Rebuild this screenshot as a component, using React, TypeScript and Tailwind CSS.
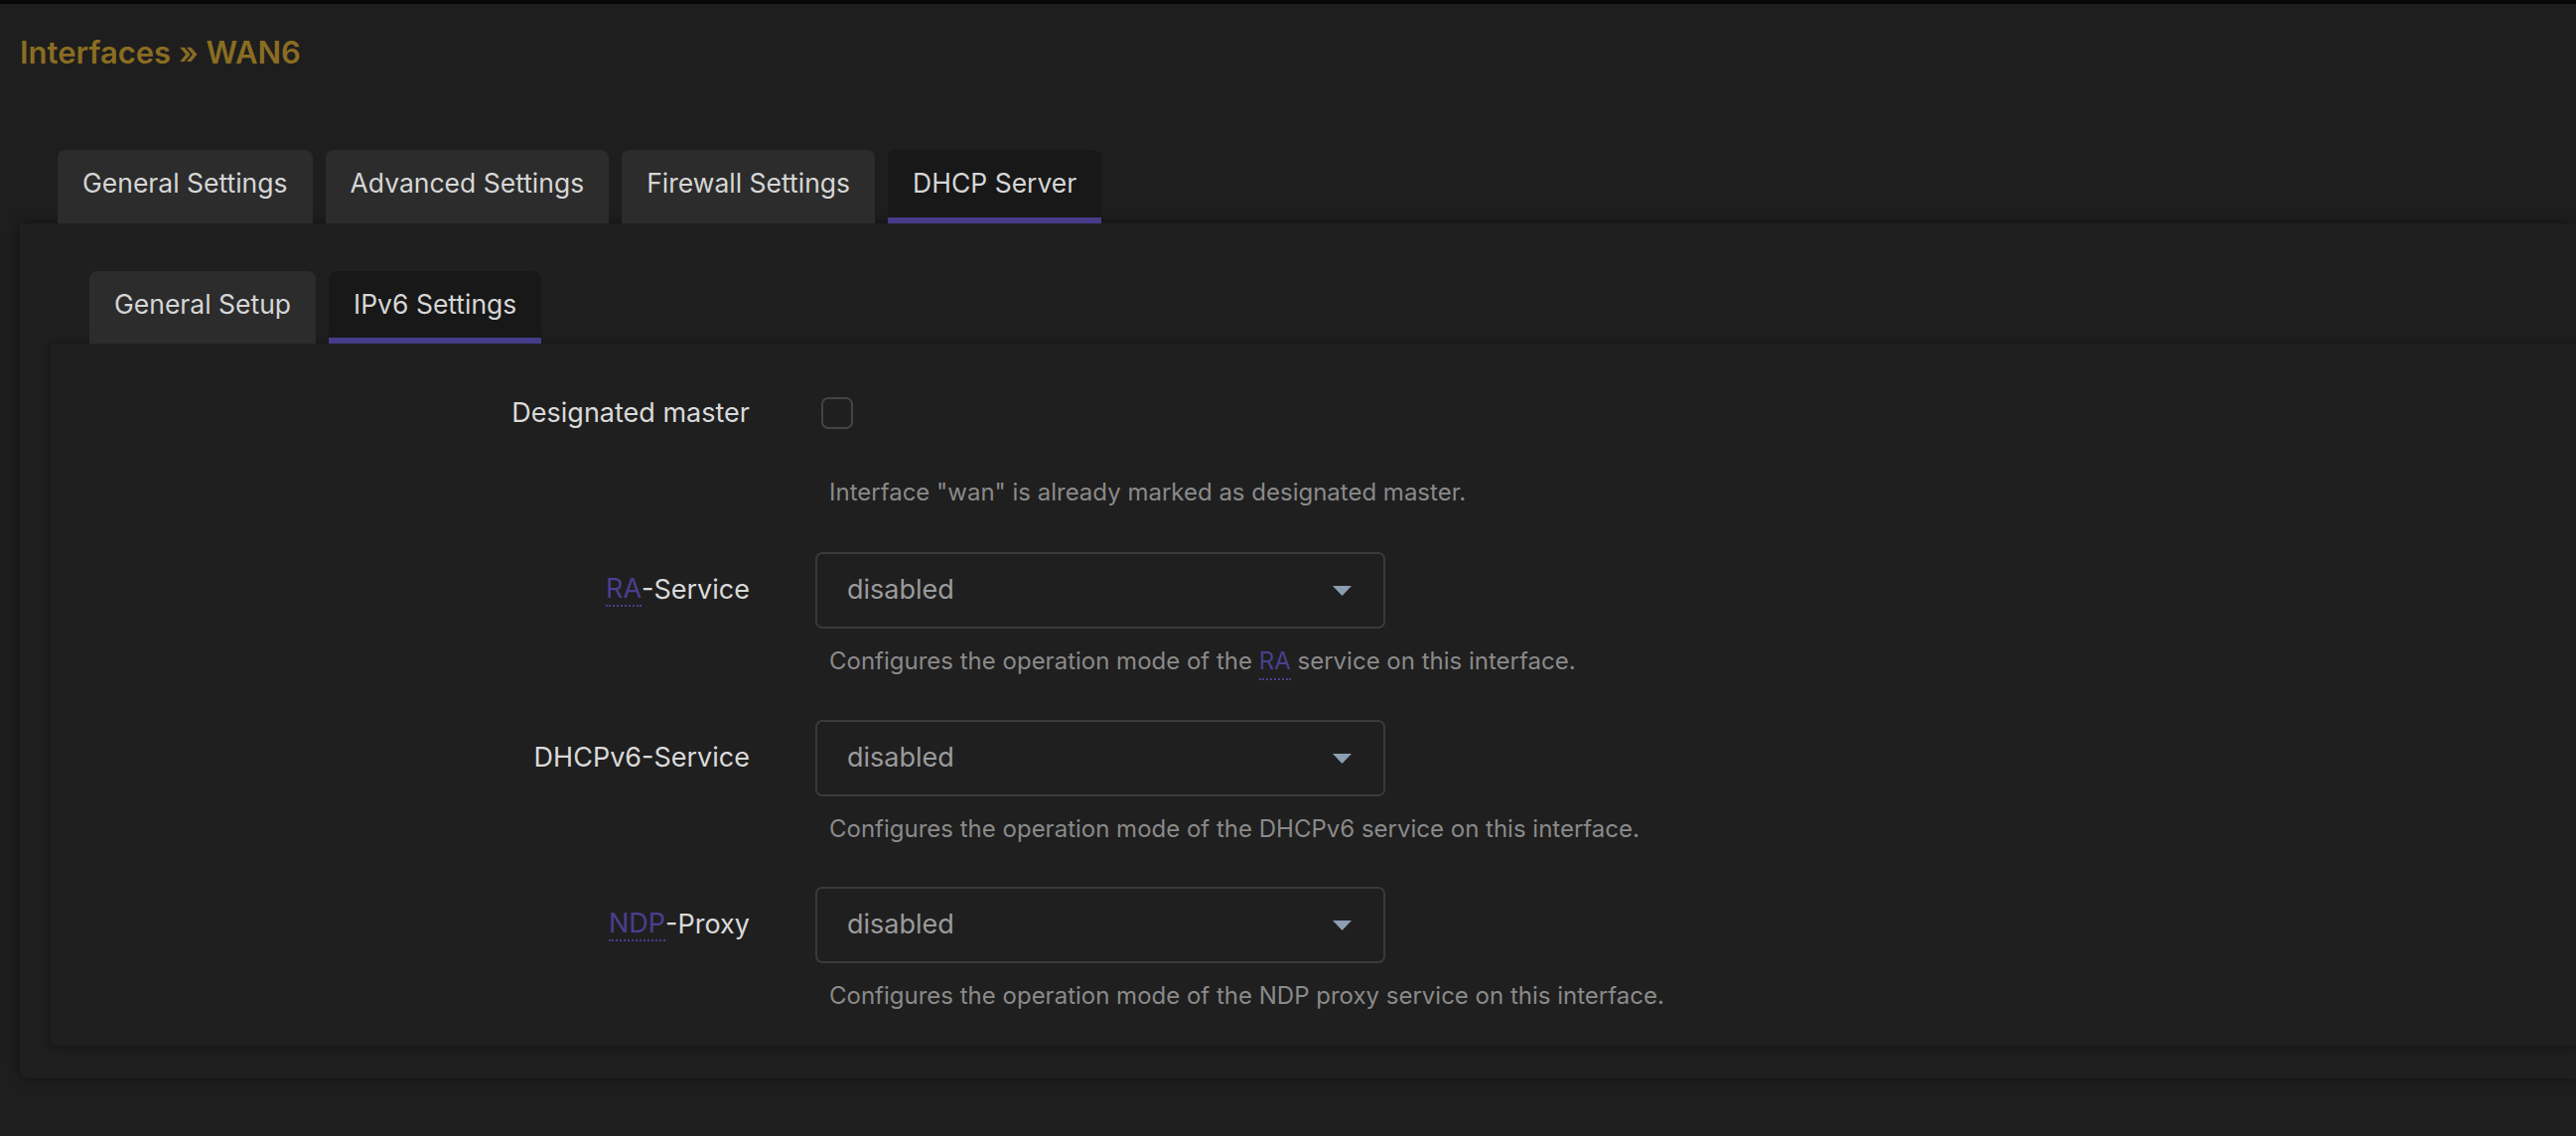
import React from "react";

const topTabs = ["General Settings", "Advanced Settings", "Firewall Settings", "DHCP Server"];
const subTabs = ["General Setup", "IPv6 Settings"];

function Tab({ label, active }: { label: string; active?: boolean }) {
  return (
    <div
      className={
        "flex items-center px-[25px] rounded-t-[8px] text-[26.5px] text-[#d6d6d6] " +
        (active
          ? "bg-[#181818] border-b-[6px] border-[#463c8a]"
          : "bg-[#2c2c2c] border-b-[6px] border-transparent")
      }
    >
      {label}
    </div>
  );
}

function Abbr({ children }: { children: React.ReactNode }) {
  return (
    <span className="text-[#4a3f8f] border-b-2 border-dotted border-[#4a3f8f] leading-none pb-[3px]">
      {children}
    </span>
  );
}

function Arrow() {
  return (
    <svg width="19" height="10" viewBox="0 0 19 10">
      <path d="M0 0 H19 L9.5 10 Z" fill="#8d9eb2" />
    </svg>
  );
}

function Select() {
  return (
    <div className="flex items-center justify-between w-[574px] h-[77px] rounded-[7px] border-2 border-[#3a3a3a] pl-[30px] pr-[32px] text-[27px] text-[#9b9b9b]">
      <span>disabled</span>
      <Arrow />
    </div>
  );
}

function Help({ children }: { children: React.ReactNode }) {
  return <div className="pl-[14px] text-[24px] leading-[30px] text-[#8a8a8a]">{children}</div>;
}

export default function App() {
  return (
    <div
      className="w-full h-[1144px] overflow-hidden bg-[#1e1e1e]"
      style={{ fontFamily: "Inter, Roboto, sans-serif" }}
    >
      <div className="h-[4px] bg-[#080808]" />
      <h1 className="pl-[20px] pt-[31px] h-[147px] text-[31px] leading-[36px] font-semibold text-[#8a6d22]">
        Interfaces » WAN6
      </h1>

      <div className="flex gap-[13px] pl-[58px] h-[74px]">
        {topTabs.map((t) => (
          <Tab key={t} label={t} active={t === "DHCP Server"} />
        ))}
      </div>

      <div className="ml-[20px] h-[861px] rounded-bl-[8px] bg-[#1f1f1f] shadow-[0_0_14px_rgba(0,0,0,0.45)] pt-[48px] pb-[33px]">
        <div className="flex gap-[13px] pl-[70px] h-[73px]">
          {subTabs.map((t) => (
            <Tab key={t} label={t} active={t === "IPv6 Settings"} />
          ))}
        </div>

        <div className="ml-[31px] h-[707px] rounded-bl-[8px] bg-[#1f1f1f] shadow-[0_0_14px_rgba(0,0,0,0.45)] pt-[39px]">
          <div className="grid grid-cols-[704px_1fr] gap-x-[66px]">
            <div className="h-[62px] flex items-center justify-end text-[27px] text-[#dadada]">
              Designated master
            </div>
            <div className="h-[62px] flex items-center pl-[6px]">
              <div className="w-[32px] h-[32px] rounded-[7px] border-2 border-[#444444]" />
            </div>
            <div />
            <div className="mt-[34px] mb-[45px]">
              <Help>Interface "wan" is already marked as designated master.</Help>
            </div>

            <div className="h-[77px] flex items-center justify-end text-[27px] text-[#dadada]">
              <Abbr>RA</Abbr>-Service
            </div>
            <Select />
            <div />
            <div className="mt-[18px] mb-[44px]">
              <Help>
                Configures the operation mode of the <Abbr>RA</Abbr> service on this interface.
              </Help>
            </div>

            <div className="h-[77px] flex items-center justify-end text-[27px] text-[#dadada]">
              DHCPv6-Service
            </div>
            <Select />
            <div />
            <div className="mt-[18px] mb-[43px]">
              <Help>Configures the operation mode of the DHCPv6 service on this interface.</Help>
            </div>

            <div className="h-[77px] flex items-center justify-end text-[27px] text-[#dadada]">
              <Abbr>NDP</Abbr>-Proxy
            </div>
            <Select />
            <div />
            <div className="mt-[18px]">
              <Help>Configures the operation mode of the NDP proxy service on this interface.</Help>
            </div>
          </div>
        </div>
      </div>
    </div>
  );
}
